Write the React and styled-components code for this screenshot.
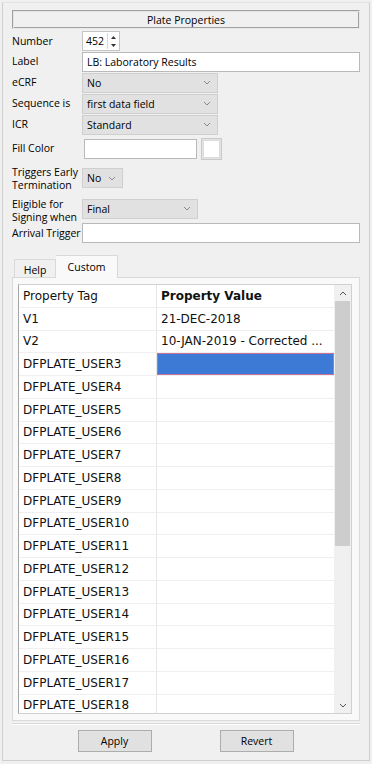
import styled, { createGlobalStyle } from "styled-components"

const GlobalStyle = createGlobalStyle`
  html, body { margin: 0; padding: 0; background: #f0f0f0; }
  * { box-sizing: border-box; }
`

const Panel = styled.div`
  margin: 2px 0 0 2px;
  width: 368px;
  height: 759px;
  border: 1px solid #cfcfcf;
  border-top-color: #e4e4e4;
  padding: 7px 9px 0 9px;
  display: flex;
  flex-direction: column;
  font-family: "Open Sans", "Liberation Sans", sans-serif;
  font-size: 10.5px;
  color: #000;
`

const TitleBar = styled.div`
  height: 19px;
  flex: none;
  border: 1px solid #a0a0a0;
  border-right-color: #e8e8e8;
  border-bottom-color: #e8e8e8;
  box-shadow: inset 1px 1px 0 #e3e3e3, inset -1px -1px 0 #a0a0a0;
  display: flex;
  align-items: center;
  justify-content: center;
  margin-bottom: 2px;
`

const Row = styled.div`
  display: flex;
  flex: none;
  align-items: center;
  height: ${(p) => p.h}px;
`

const Label = styled.div`
  width: 70px;
  flex: none;
  line-height: 13px;
  white-space: nowrap;
  padding-top: ${(p) => p.pt || 0}px;
`

const TextInput = styled.div`
  height: 20px;
  width: ${(p) => (p.w ? p.w + "px" : "auto")};
  flex: ${(p) => (p.w ? "none" : "1")};
  margin-left: ${(p) => p.ml || 0}px;
  background: #fff;
  border: 1px solid #b9b9b9;
  padding: 0 4px;
  display: flex;
  align-items: center;
`

const SelectBox = styled.div`
  height: 20px;
  width: ${(p) => p.w}px;
  background: #e1e1e1;
  border: 1px solid #cfcfcf;
  padding: 0 6px 0 4px;
  display: flex;
  align-items: center;
  justify-content: space-between;
`

const Spin = styled.div`
  height: 20px;
  width: 38px;
  background: #fff;
  border: 1px solid #c4c4c4;
  display: flex;
  align-items: center;
  justify-content: space-between;
  padding: 0 1px 0 3px;
`

const SpinArrows = styled.div`
  width: 11px;
  height: 16px;
  border-left: 1px solid #d8d8d8;
  display: flex;
  flex-direction: column;
  align-items: center;
  justify-content: space-around;
`

const Swatch = styled.div`
  width: 21px;
  height: 22px;
  margin-left: 4px;
  background: #fff;
  border: 1px solid #c9c9c9;
  box-shadow: inset 0 0 0 1px #e3e3e3, inset 0 0 0 2px #dcdcdc;
`

const Tabs = styled.div`
  display: flex;
  flex: none;
  align-items: flex-end;
  margin-top: 12px;
  height: 23px;
  padding-left: 2px;
  position: relative;
  z-index: 1;
`

const Tab = styled.div`
  height: ${(p) => (p.active ? 23 : 19)}px;
  width: ${(p) => p.w}px;
  background: ${(p) => (p.active ? "#f9f9f9" : "#f0f0f0")};
  border: 1px solid #d9d9d9;
  border-bottom: ${(p) => (p.active ? "none" : "1px solid #d9d9d9")};
  border-left: ${(p) => (p.active ? "none" : "1px solid #d9d9d9")};
  display: flex;
  align-items: center;
  justify-content: center;
  padding-top: ${(p) => (p.active ? 0 : 3)}px;
`

const TabPane = styled.div`
  height: 444px;
  flex: none;
  margin-top: -1px;
  background: #f9f9f9;
  border: 1px solid #d9d9d9;
  padding: 6px 7px 0 5px;
`

const Table = styled.div`
  height: 430px;
  border: 1px solid #d0d0d0;
  border-left-color: #a6a6a6;
  background: #fff;
  display: flex;
  overflow: hidden;
  font-family: "DejaVu Sans", sans-serif;
  font-size: 12px;
  color: #111;
`

const Grid = styled.div`
  flex: 1;
  display: grid;
  grid-template-columns: 138px 1fr;
  grid-auto-rows: 22.75px;
`

const Cell = styled.div`
  border-bottom: 1px solid #efefef;
  border-right: ${(p) => (p.first ? "1px solid #e6e6e6" : "none")};
  padding: 0 4px;
  display: flex;
  align-items: center;
  white-space: nowrap;
  overflow: hidden;
  font-weight: ${(p) => (p.bold ? "bold" : "normal")};
  background: ${(p) => (p.selected ? "#3d7ad6" : "transparent")};
  box-shadow: ${(p) => (p.selected ? "inset 0 0 0 1px #c8709a" : "none")};
`

const ScrollBar = styled.div`
  width: 17px;
  flex: none;
  background: #f0f0f0;
  display: flex;
  flex-direction: column;
`

const ScrollArrow = styled.div`
  height: 16px;
  display: flex;
  align-items: center;
  justify-content: center;
`

const Thumb = styled.div`
  height: 245px;
  margin: 0 1px;
  background: #cdcdcd;
`

const Track = styled.div`
  flex: 1;
`

const Separator = styled.div`
  margin-top: 2px;
  border-top: 1px solid #d9d9d9;
  border-bottom: 1px solid #fff;
`

const Buttons = styled.div`
  display: flex;
  justify-content: center;
  gap: 68px;
  margin-top: 5px;
  padding-right: 1px;
`

const Button = styled.div`
  width: 74px;
  height: 22px;
  background: #e1e1e1;
  border: 1px solid #adadad;
  display: flex;
  align-items: center;
  justify-content: center;
`

const Chevron = ({ up, color = "#8a8a8a" }) => (
  <svg width="8" height="5" viewBox="0 0 8 5">
    <path d={up ? "M1 4 L4 1 L7 4" : "M1 1 L4 4 L7 1"} fill="none" stroke={color} strokeWidth="1" />
  </svg>
)

const Tri = ({ up }) => (
  <svg width="5" height="3" viewBox="0 0 5 3">
    <path d={up ? "M0 3 L2.5 0 L5 3 Z" : "M0 0 L2.5 3 L5 0 Z"} fill="#333" />
  </svg>
)

const Select = ({ w, children }) => (
  <SelectBox w={w}>
    <span>{children}</span>
    <Chevron />
  </SelectBox>
)

const rows = [
  ["V1", "21-DEC-2018"],
  ["V2", "10-JAN-2019 - Corrected ..."],
]
for (let i = 3; i <= 18; i++) rows.push(["DFPLATE_USER" + i, ""])

export default function App() {
  return (
    <>
      <GlobalStyle />
      <Panel>
        <TitleBar>Plate Properties</TitleBar>
        <Row h={20}>
          <Label>Number</Label>
          <Spin>
            <span>452</span>
            <SpinArrows>
              <Tri up />
              <Tri />
            </SpinArrows>
          </Spin>
        </Row>
        <Row h={21}>
          <Label>Label</Label>
          <TextInput>LB: Laboratory Results</TextInput>
        </Row>
        <Row h={21}>
          <Label>eCRF</Label>
          <Select w={136}>No</Select>
        </Row>
        <Row h={21}>
          <Label>Sequence is</Label>
          <Select w={136}>first data field</Select>
        </Row>
        <Row h={21}>
          <Label>ICR</Label>
          <Select w={136}>Standard</Select>
        </Row>
        <Row h={27}>
          <Label>Fill Color</Label>
          <TextInput w={113} ml={2} />
          <Swatch />
        </Row>
        <Row h={32}>
          <Label pt={2}>Triggers Early<br />Termination</Label>
          <Select w={41}>No</Select>
        </Row>
        <Row h={29}>
          <Label pt={4}>Eligible for<br />Signing when</Label>
          <Select w={116}>Final</Select>
        </Row>
        <Row h={20}>
          <Label>Arrival Trigger</Label>
          <TextInput />
        </Row>

        <Tabs>
          <Tab w={42}>Help</Tab>
          <Tab w={62} active>Custom</Tab>
        </Tabs>
        <TabPane>
          <Table>
            <Grid>
              <Cell first>Property Tag</Cell>
              <Cell bold>Property Value</Cell>
              {rows.map(([tag, val], i) => [
                <Cell first key={tag}>{tag}</Cell>,
                <Cell key={tag + "v"} selected={i === 2}>{val}</Cell>,
              ])}
            </Grid>
            <ScrollBar>
              <ScrollArrow>
                <Chevron up color="#555" />
              </ScrollArrow>
              <Thumb />
              <Track />
              <ScrollArrow>
                <Chevron color="#555" />
              </ScrollArrow>
            </ScrollBar>
          </Table>
        </TabPane>
        <Separator />
        <Buttons>
          <Button>Apply</Button>
          <Button>Revert</Button>
        </Buttons>
      </Panel>
    </>
  )
}
